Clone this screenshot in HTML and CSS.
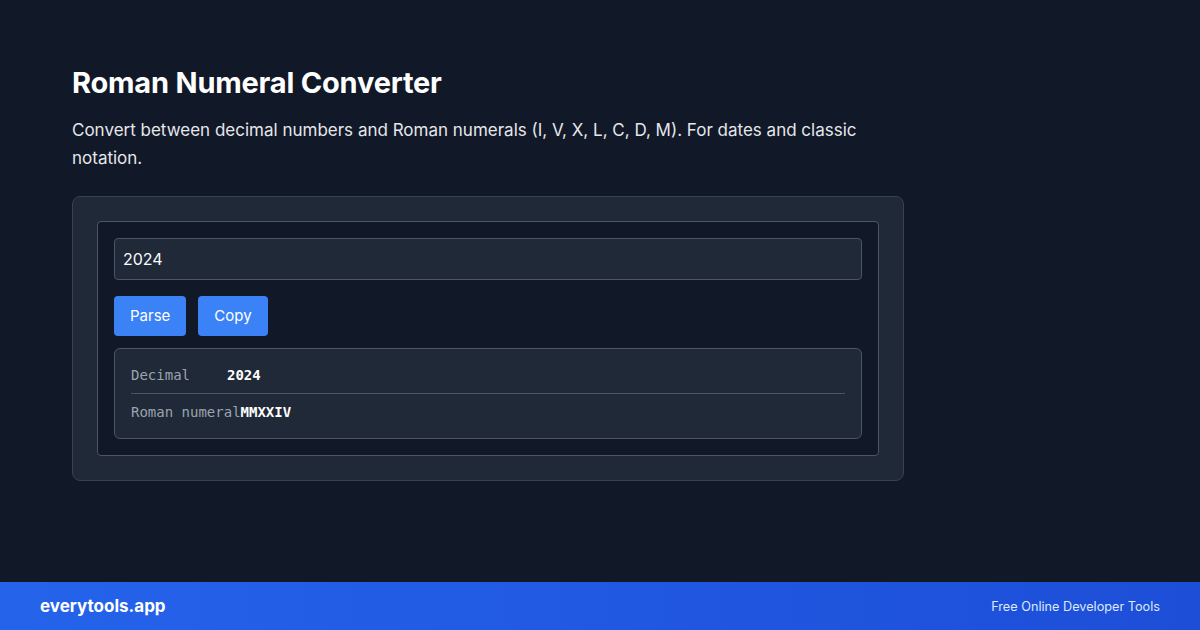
FILE: index.html
```html
<!DOCTYPE html>
<html lang="en">
<head>
<meta charset="utf-8">
<title>Roman Numeral Converter</title>
<link rel="stylesheet" href="styles.css">
</head>
<body>
<div class="page">
  <main class="main">
    <h1 class="title">Roman Numeral Converter</h1>
    <p class="desc">Convert between decimal numbers and Roman numerals (I, V, X, L, C, D, M). For dates and classic notation.</p>
    <section class="card">
      <div class="panel">
        <div class="input">2024</div>
        <div class="actions">
          <button class="btn">Parse</button>
          <button class="btn">Copy</button>
        </div>
        <div class="result">
          <div class="row"><span class="label">Decimal</span><span class="value">2024</span></div>
          <div class="row"><span class="label">Roman numeral</span><span class="value">MMXXIV</span></div>
        </div>
      </div>
    </section>
  </main>
  <footer class="footer">
    <span class="brand">everytools.app</span>
    <span class="tagline">Free Online Developer Tools</span>
  </footer>
</div>
</body>
</html>
```

FILE: styles.css
```css
* { box-sizing: border-box; }
html, body { margin: 0; padding: 0; }
body {
  background: #111827;
  font-family: Inter, "Noto Sans", "Liberation Sans", sans-serif;
  color: #f9fafb;
}
.page {
  width: 1200px;
  height: 630px;
  display: flex;
  flex-direction: column;
}
.main {
  flex: 1;
  padding: 66px 72px 0;
}
.title {
  margin: 0;
  font-size: 29px;
  line-height: 34px;
  font-weight: 700;
  color: #ffffff;
  letter-spacing: -0.2px;
}
.desc {
  margin: 16px 0 0;
  width: 832px;
  font-size: 17px;
  line-height: 28px;
  color: #e5e7eb;
}
.card {
  margin-top: 24px;
  width: 832px;
  background: #1f2937;
  border: 1px solid #374151;
  border-radius: 8px;
  padding: 24px;
}
.panel {
  background: #111827;
  border: 1px solid #4b5563;
  border-radius: 4px;
  padding: 16px;
}
.input {
  height: 42px;
  background: #1f2937;
  border: 1px solid #4b5563;
  border-radius: 4px;
  padding: 10px 8px;
  font-size: 16px;
  line-height: 20px;
  color: #f9fafb;
}
.actions {
  display: flex;
  gap: 12px;
  margin-top: 16px;
}
.btn {
  height: 40px;
  padding: 0 16px;
  background: #3b82f6;
  color: #ffffff;
  border: none;
  border-radius: 4px;
  font-family: Inter, "Noto Sans", sans-serif;
  font-size: 15px;
  line-height: 20px;
}
.result {
  margin-top: 12px;
  background: #1f2937;
  border: 1px solid #4b5563;
  border-radius: 6px;
  padding: 8px 16px;
  font-family: "DejaVu Sans Mono", "Liberation Mono", monospace;
  font-size: 14px;
  line-height: 20px;
}
.row {
  display: flex;
  padding: 8px 0;
}
.row + .row { border-top: 1px solid #4b5563; }
.label {
  min-width: 96px;
  color: #9ca3af;
}
.value {
  color: #ffffff;
  font-weight: 700;
}
.footer {
  height: 48px;
  display: flex;
  align-items: center;
  justify-content: space-between;
  padding: 0 40px;
  background: linear-gradient(90deg, #2563eb, #1d4ed8);
}
.brand {
  font-size: 17px;
  font-weight: 700;
  color: #ffffff;
}
.tagline {
  font-size: 12.7px;
  color: #dbeafe;
}
```
